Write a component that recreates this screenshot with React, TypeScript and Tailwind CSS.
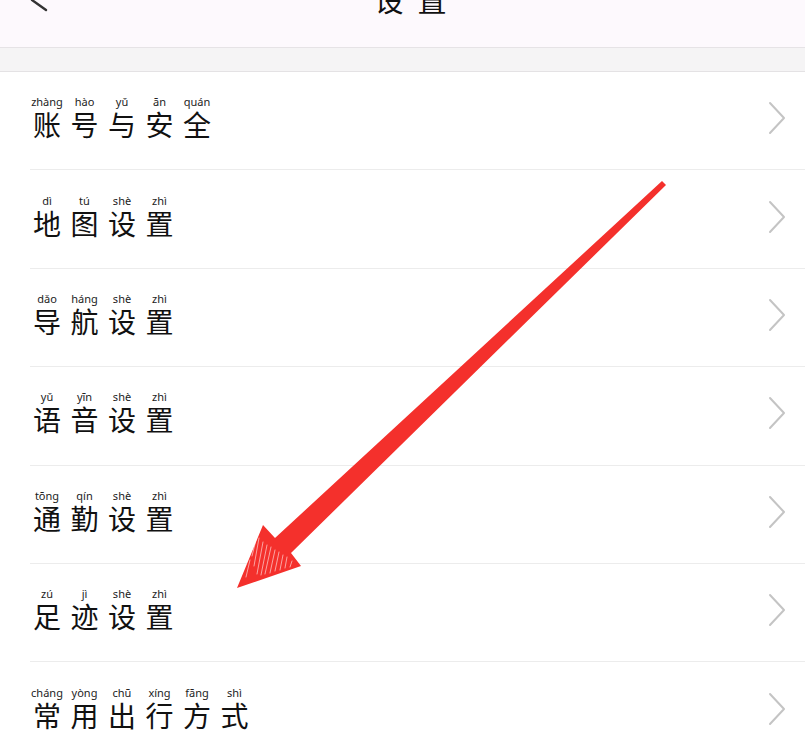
import React from 'react';

type Item = { chars: [string, string][] };

const items: Item[] = [
  { chars: [['账', 'zhàng'], ['号', 'hào'], ['与', 'yǔ'], ['安', 'ān'], ['全', 'quán']] },
  { chars: [['地', 'dì'], ['图', 'tú'], ['设', 'shè'], ['置', 'zhì']] },
  { chars: [['导', 'dǎo'], ['航', 'háng'], ['设', 'shè'], ['置', 'zhì']] },
  { chars: [['语', 'yǔ'], ['音', 'yīn'], ['设', 'shè'], ['置', 'zhì']] },
  { chars: [['通', 'tōng'], ['勤', 'qín'], ['设', 'shè'], ['置', 'zhì']] },
  { chars: [['足', 'zú'], ['迹', 'jì'], ['设', 'shè'], ['置', 'zhì']] },
  { chars: [['常', 'cháng'], ['用', 'yòng'], ['出', 'chū'], ['行', 'xíng'], ['方', 'fāng'], ['式', 'shì']] },
];

function Chevron() {
  return (
    <svg width="20" height="34" viewBox="0 0 20 34" className="shrink-0">
      <polyline points="3,2 17,17 3,32" fill="none" stroke="#c4c4c4" strokeWidth="2" strokeLinecap="round" strokeLinejoin="round" />
    </svg>
  );
}

function PinyinWord({ chars }: Item) {
  return (
    <div className="flex items-end gap-[9.5px]">
      {chars.map(([c, p], i) => (
        <div key={i} className="flex w-[28px] flex-col items-center">
          <span className="whitespace-nowrap text-[11px] leading-[12px] text-[#222] font-['Noto_Sans',sans-serif]">{p}</span>
          <span className="text-[28px] leading-[32px] text-[#111]">{c}</span>
        </div>
      ))}
    </div>
  );
}

function Arrow() {
  return (
    <svg className="pointer-events-none absolute left-0 top-0" width="805" height="736" viewBox="0 0 805 736">
      <polygon
        points="662,181 666,185 291,553 301,566 237,588 263,525 275,538"
        fill="#f4302c"
      />
      <g stroke="#ffffff" strokeWidth="0.8" strokeOpacity="0.7" strokeLinecap="round">
        <line x1="256" y1="540" x2="252" y2="556" />
        <line x1="259" y1="538" x2="254" y2="566" />
        <line x1="263" y1="542" x2="257" y2="574" />
        <line x1="267" y1="545" x2="261" y2="575" />
        <line x1="271" y1="547" x2="265" y2="574" />
        <line x1="275" y1="550" x2="270" y2="573" />
        <line x1="279" y1="552" x2="275" y2="571" />
        <line x1="283" y1="555" x2="280" y2="570" />
        <line x1="287" y1="557" x2="285" y2="568" />
        <line x1="292" y1="561" x2="290" y2="567" />
        <line x1="250" y1="560" x2="246" y2="577" />
      </g>
    </svg>
  );
}

export default function App() {
  return (
    <div className="relative h-[736px] w-[805px] overflow-hidden bg-white font-['Noto_Sans_CJK_SC',sans-serif]">
      <header className="flex h-[48px] items-start border-b border-[#e6e3e6] bg-[#fdf9fd]">
        <svg width="40" height="30" viewBox="0 0 40 30" className="-mt-[10px] ml-[20px] shrink-0">
          <polyline points="28,0 12,10 26,20" fill="none" stroke="#333" strokeWidth="2.4" strokeLinecap="round" strokeLinejoin="round" />
        </svg>
        <div className="-mt-[16px] flex flex-1 justify-center pr-[44px]">
          <span className="pl-[14px] text-[29px] leading-[30px] tracking-[14px] text-[#111]">设置</span>
        </div>
      </header>
      <div className="h-[24px] border-b border-[#e4e2e4] bg-[#f5f4f5]" />
      <div className="pl-[30px]">
        {items.map((it, i) => (
          <div key={i} className="flex h-[98.4px] items-center justify-between border-b border-[#ececec] pb-[5px] pl-[3px] pr-[18px]">
            <PinyinWord chars={it.chars} />
            <Chevron />
          </div>
        ))}
      </div>
      <Arrow />
    </div>
  );
}
